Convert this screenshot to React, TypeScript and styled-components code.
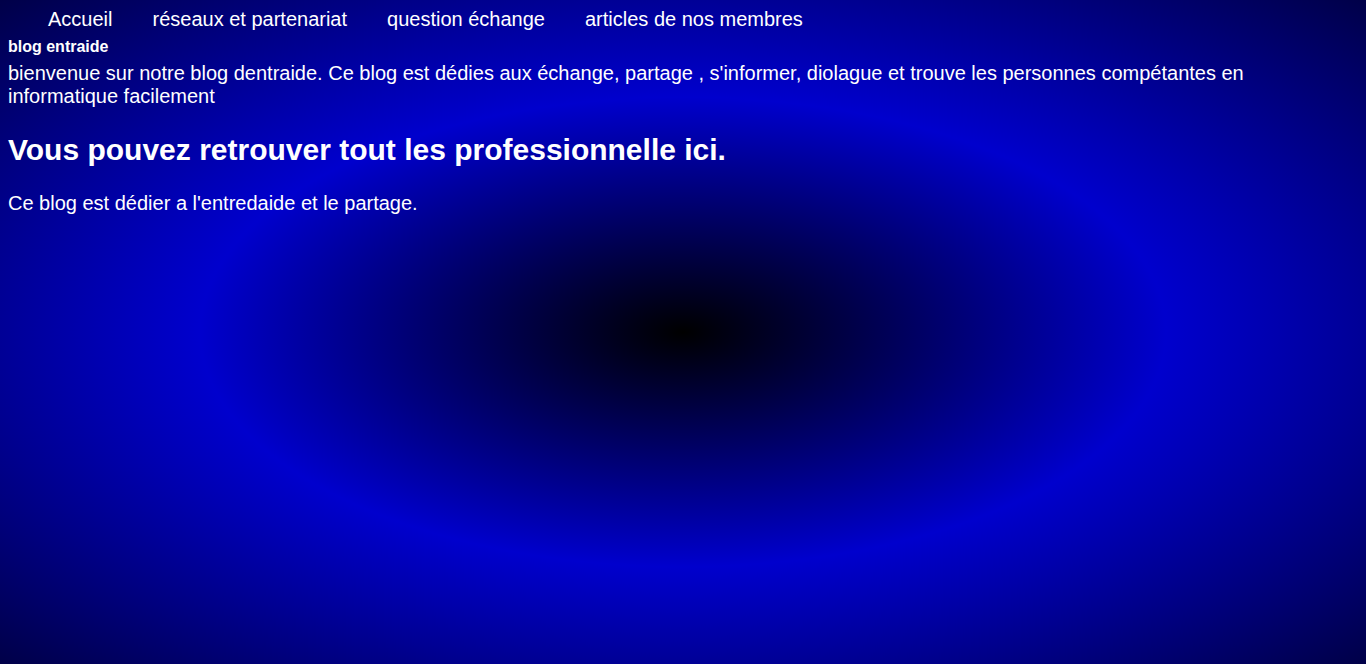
import React from "react";
import styled, { createGlobalStyle } from "styled-components";

const GlobalStyle = createGlobalStyle`
  html, body {
    margin: 0;
    padding: 0;
    height: 100%;
  }
  body {
    font-family: "Liberation Sans", Arial, sans-serif;
    color: #ffffff;
  }
`;

const Page = styled.div`
  box-sizing: border-box;
  min-height: 100vh;
  padding: 8px;
  background: radial-gradient(#000000, #0000cd, #000048);
`;

const Nav = styled.nav`
  display: block;
`;

const NavList = styled.ul`
  display: flex;
  gap: 40px;
  margin: 0;
  padding: 0 0 0 40px;
  list-style: none;
`;

const NavItem = styled.li`
  font-size: 20px;
  line-height: 23px;
  color: #ffffff;
`;

const SiteTitle = styled.h4`
  margin: 7px 0 0;
  font-size: 16px;
  font-weight: bold;
  line-height: 18px;
`;

const Text = styled.p<{ $top: number }>`
  margin: ${(p) => p.$top}px 0 0;
  font-size: 20px;
  line-height: 23px;
`;

const Heading = styled.h1`
  margin: 25px 0 0;
  font-size: 30px;
  font-weight: bold;
  line-height: 34.5px;
`;

const items = [
  "Accueil",
  "réseaux et partenariat",
  "question échange",
  "articles de nos membres",
];

export default function App() {
  return (
    <>
      <GlobalStyle />
      <Page>
        <Nav>
          <NavList>
            {items.map((it) => (
              <NavItem key={it}>{it}</NavItem>
            ))}
          </NavList>
        </Nav>
        <SiteTitle>blog entraide</SiteTitle>
        <Text $top={5.5}>
          bienvenue sur notre blog dentraide. Ce blog est dédies aux échange,
          partage , s'informer, diolague et trouve les personnes compétantes en
          informatique facilement
        </Text>
        <Heading>Vous pouvez retrouver tout les professionnelle ici.</Heading>
        <Text $top={25}>Ce blog est dédier a l'entredaide et le partage.</Text>
      </Page>
    </>
  );
}
